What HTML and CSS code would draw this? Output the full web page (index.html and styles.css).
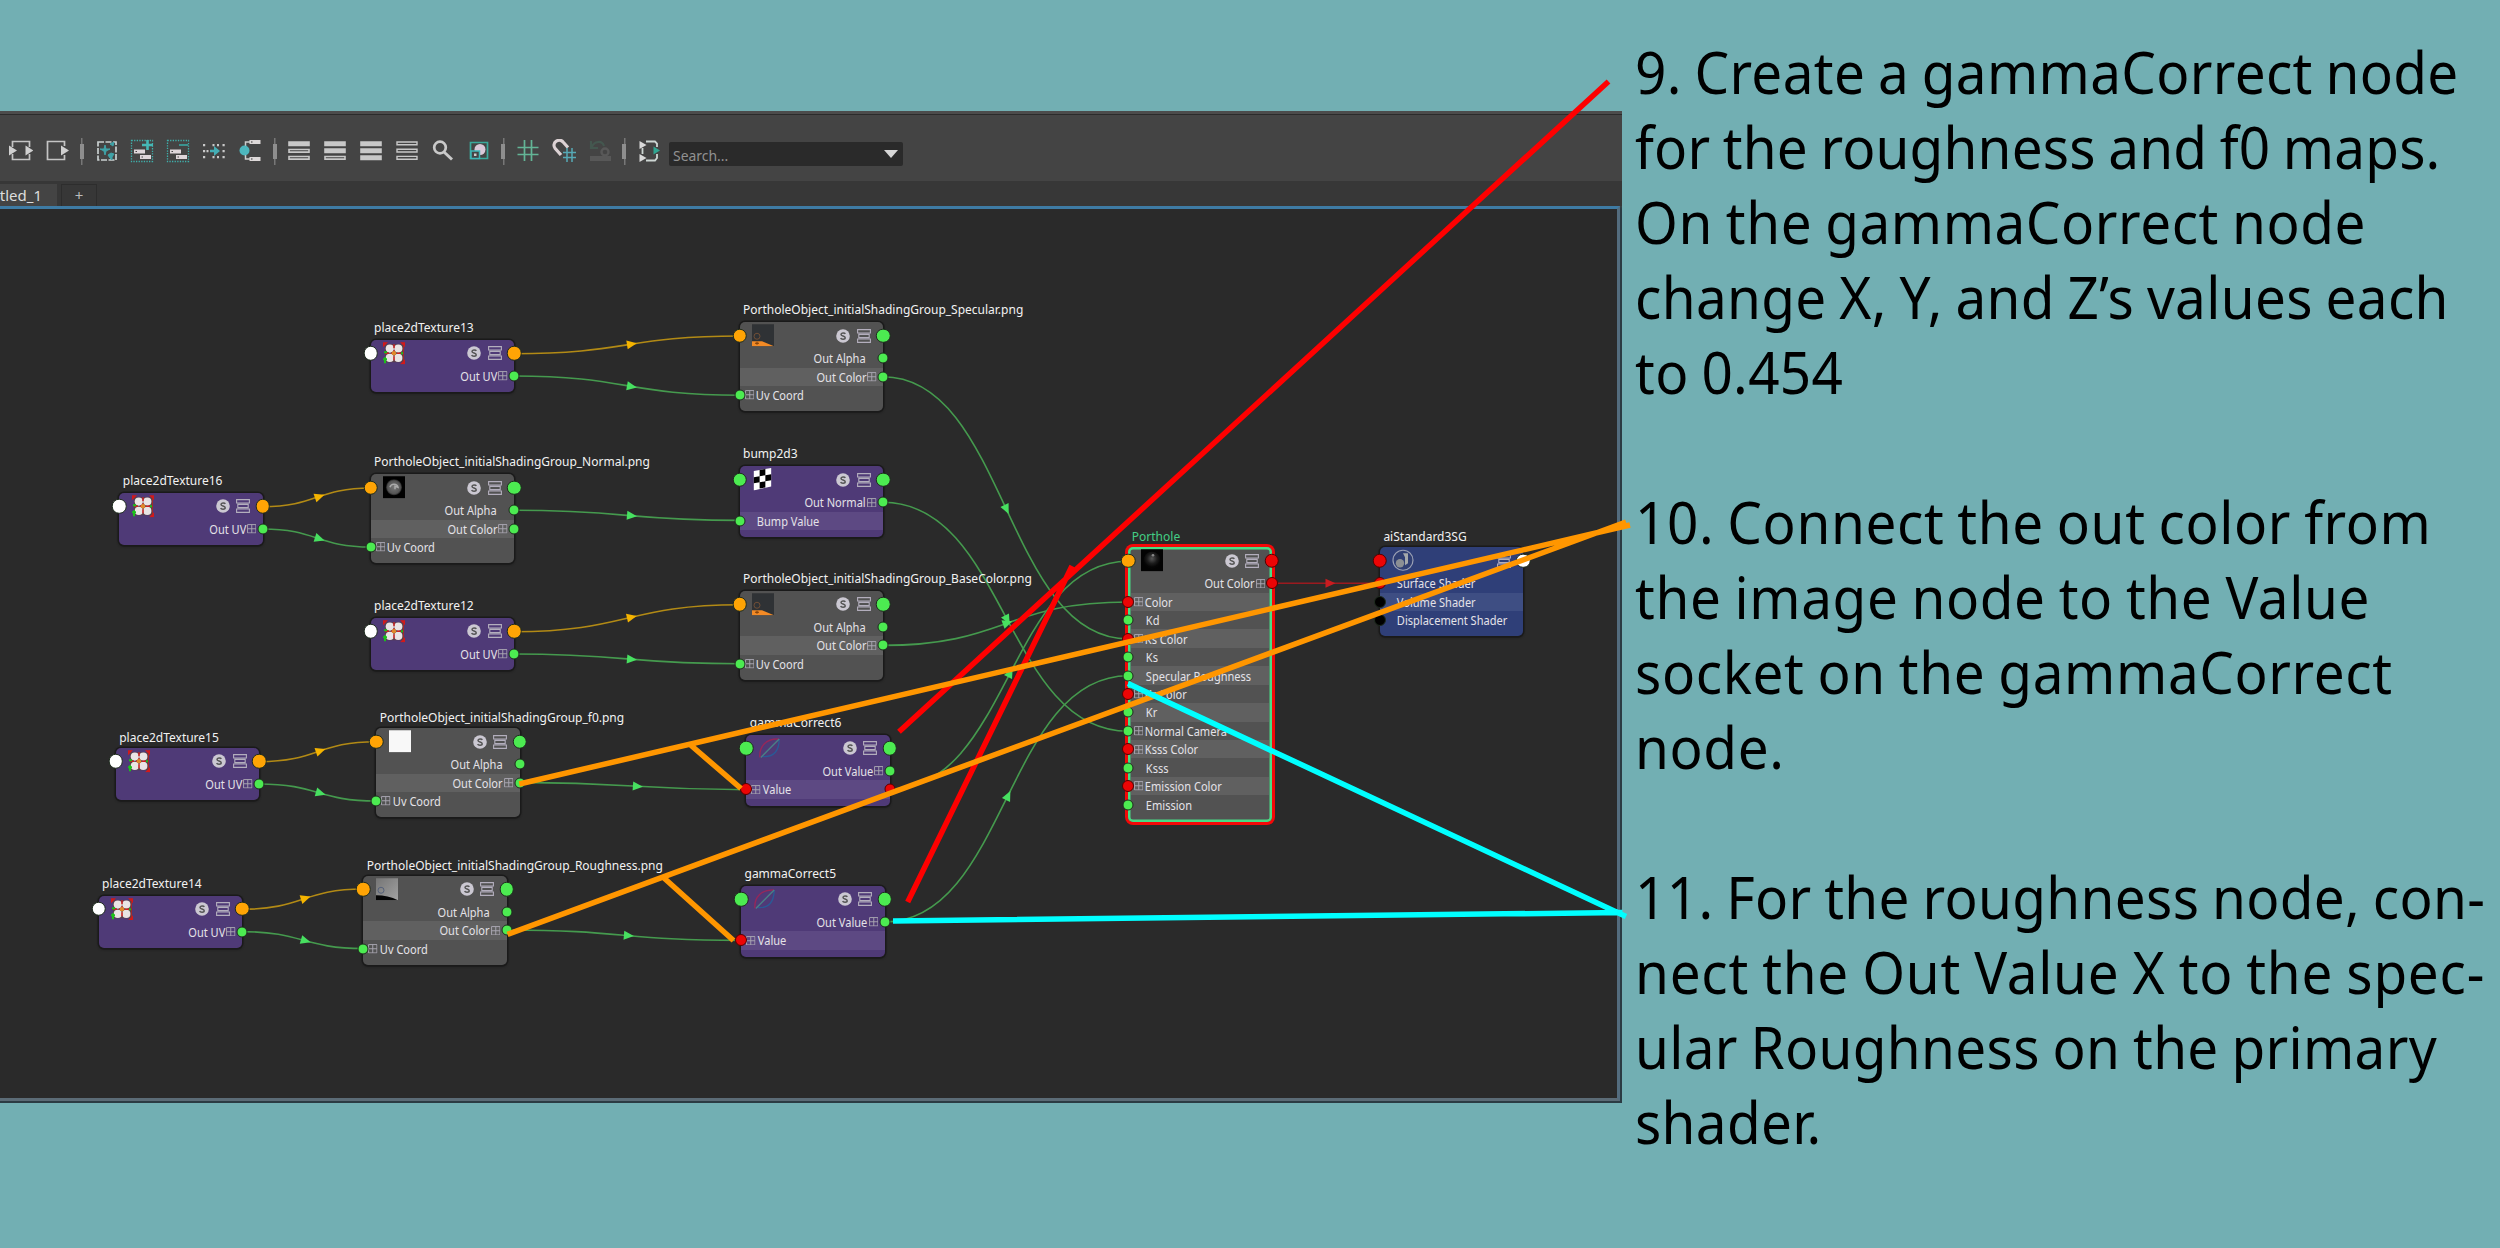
FILE: index.html
```html
<!DOCTYPE html>
<html lang="en">
<head>
<meta charset="utf-8">
<title>Shader graph walkthrough</title>
<link rel="stylesheet" href="styles.css">
</head>
<body>
<svg class="defs" aria-hidden="true">
  <defs>
    <radialGradient id="orb" cx=".5" cy=".4" r=".5"><stop offset="0" stop-color="#555"/><stop offset=".6" stop-color="#1b1b1b"/><stop offset="1" stop-color="#050505"/></radialGradient>
    <radialGradient id="disc"><stop offset="0" stop-color="#777"/><stop offset=".8" stop-color="#555"/><stop offset="1" stop-color="#222"/></radialGradient>
    <linearGradient id="fog" x1="0" y1="0" x2="1" y2="1"><stop offset="0" stop-color="#757575"/><stop offset="1" stop-color="#a2a2a2"/></linearGradient>
  </defs>
  <symbol id="arrow" viewBox="0 0 10 10" overflow="visible"><path d="M0-4.5 10 0 0 4.5Z"/></symbol>
  <symbol id="solo" viewBox="0 0 14 14"><circle cx="7" cy="7" r="6.8" fill="#cbc8d2"/><path d="M9.300 4.900C8.700 3.500 5 3.400 5 5.500 5 7.400 9.200 6.600 9.200 8.700 9.200 10.700 5.200 10.600 4.700 9" fill="none" stroke="#555" stroke-width="1.500"/></symbol>
  <symbol id="bars" viewBox="0 0 14 14"><g fill="none" stroke="#b3aebd" stroke-width="1.100"><path d="M.6.6h12.800v3.400H.6zM.6 10h12.800v3.400H.6zM1.800 5.400h10.400v3.200H1.800z"/></g></symbol>
  <symbol id="plus" viewBox="0 0 10 10"><path d="M.6.6h8.800v8.800H.6zM5 .6v8.800M.6 5h8.800" fill="none" stroke="#aaa6b2" stroke-width="1"/></symbol>
  <symbol id="t-uv" viewBox="0 0 22 22"><path d="M2 2h18v18H2z" fill="#5a3f4a"/><g fill="#e9e4e4"><circle cx="6.800" cy="6.300" r="4.100"/><circle cx="15.300" cy="6.300" r="4.100"/><circle cx="6.800" cy="15.700" r="4.100"/><circle cx="15.300" cy="15.700" r="4.100"/></g><path d="M0 0h5L0 5zM22 0h-5l5 5zM22 22h-5l5-5z" fill="#d11a1a"/><path d="M11 2v18M2 11h18" stroke="#c22" stroke-width="1.500" stroke-dasharray="4 2"/><path d="M0 17h4M2 15v6M1 10h3M18 11h3" stroke="#1bc01b" stroke-width="2"/><circle cx="11" cy="11" r="2.200" fill="#e0892a"/><path d="M20.500 3v16" stroke="#a12a2a"/></symbol>
  <symbol id="t-normal" viewBox="0 0 22 22"><path d="M0 0h22v22H0z"/><circle cx="11" cy="11" r="8" fill="url(#disc)"/><path d="M7 11c1-4 7-4 8 0l-3-1v3" fill="none" stroke="#aaa" stroke-width="1.500"/></symbol>
  <symbol id="t-color" viewBox="0 0 22 22"><path d="M0 0h22v22H0z" fill="#2f3235"/><circle cx="5" cy="12" r="3" fill="none" stroke="#704e35"/><path d="M0 17l10 0 12 5H0z" fill="#f38a25"/><path d="M3 19h4M5 17.500v3" stroke="#7a3c08"/></symbol>
  <symbol id="t-white" viewBox="0 0 22 22"><path d="M0 0h22v22H0z" fill="#f8f8f8"/></symbol>
  <symbol id="t-rough" viewBox="0 0 22 22"><path d="M0 0h22v22H0z" fill="url(#fog)"/><path d="M0 17q12 0 22 5H0z" fill="#050505"/><circle cx="5" cy="12" r="3" fill="none" stroke="#55617a"/></symbol>
  <symbol id="t-check" viewBox="0 0 20 22"><path d="M1 3 18 0v18L1 22z" fill="#fff"/><path d="M6.700 2 12.300 1v6L6.700 8zM1 9l5.700-1v6L1 15zM12.300 7 18 6v6l-5.700 1zM6.700 14l5.600-1v6l-5.600 1z"/></symbol>
  <symbol id="t-gamma" viewBox="0 0 24 24"><g fill="none" stroke-width="1.500"><path d="M1 22C0 10 8 1 22 2" stroke="#96275a"/><path d="M22 2C22 14 17 22 4 21" stroke="#2a5a96"/><path d="M2 22 22 2" stroke="#4a7f86"/></g></symbol>
  <symbol id="t-orb" viewBox="0 0 22 22"><path d="M0 0h22v22H0z" fill="#030303"/><circle cx="11" cy="11" r="8.500" fill="url(#orb)"/><circle cx="12" cy="6" r="1.300" fill="#888"/></symbol>
  <symbol id="t-sg" viewBox="0 0 22 22"><circle cx="11" cy="11" r="10" fill="#303f73" stroke="#9aa0b4" stroke-width="1.200"/><circle cx="8" cy="14" r="4.200" fill="#8b8f94"/><path d="M11 4h5v10l-3 2V8z" fill="#a5a9ab"/></symbol>
</svg>

<main class="page">
  <section class="editor">
    <div class="toolbar">
      <svg class="tool" viewBox="0 0 24 24"><path d="M3.500 8V2.500h17V8M3.500 15v5.500h17V15" fill="none" stroke="#c4c4c4" stroke-width="1.700"/><path d="M0 6.500l8 5-8 5zM16.500 6.500l8 5-8 5z" fill="#d0d0d0"/></svg>
      <svg class="tool" viewBox="0 0 24 24"><path d="M19.500 7V2.500h-17v18h17V16" fill="none" stroke="#c4c4c4" stroke-width="1.700"/><path d="M16 6.500l8 5-8 5z" fill="#d0d0d0"/></svg>
      <span class="sep"></span>
      <svg class="tool" viewBox="0 0 24 24"><path d="M3 3h18v18H3z" fill="none" stroke="#c9d0d0" stroke-width="1.700" stroke-dasharray="6 1.500"/><path d="M5 10h4l1-4 1 4h4l-4 2-1 4-1-4zM13 16l3-2 3 1-2 3v3l-2-2zM15 5l4-2-1 4z" fill="#3fa3a8" stroke="#3fa3a8"/></svg>
      <svg class="tool" viewBox="0 0 24 24"><path d="M1.500 1.500h21v21h-21z" fill="none" stroke="#3fb0ab" stroke-width="1.300" stroke-dasharray="1.300 1.300"/><path d="M12 6h11M17.500 1v10" stroke="#45b8b6" stroke-width="2.600"/><path d="M4 10.500h11v4H4zM10 16h11v4H10z" fill="#ded6da"/><path d="M5.500 12.500h1.500M11.500 18H13" stroke="#444"/></svg>
      <svg class="tool" viewBox="0 0 24 24"><path d="M1.500 1.500h21v21h-21z" fill="none" stroke="#3fb0ab" stroke-width="1.300" stroke-dasharray="1.300 1.300"/><path d="M13 6h9" stroke="#3b938f" stroke-width="2"/><path d="M4 10.500h11v4H4zM10 16h11v4H10z" fill="#ded6da"/><path d="M5.500 12.500h1.500M11.500 18H13" stroke="#444"/></svg>
      <svg class="tool" viewBox="0 0 24 24"><g fill="#c9c9c9"><path d="M1 5h2.200v2.200H1zM1 11h2.200v2.200H1zM1 17h2.200v2.200H1zM4.500 11h2v2.200h-2zM10.500 5h2v2.200h-2zM15 5h2v2.200h-2zM20.500 5h2.200v2.200h-2.200zM20.500 11h2.200v2.200h-2.200zM20.500 17h2.200v2.200h-2.200zM10.500 17h2v2.200h-2zM15 17h2v2.200h-2z"/></g><path d="M8 12h5" stroke="#44aeb5" stroke-width="2.500"/><path d="M12 7l6 5-6 5z" fill="#44aeb5"/></svg>
      <svg class="tool" viewBox="0 0 24 24"><path d="M12 3H7.500v4M7.500 16v4H12" fill="none" stroke="#ccc" stroke-width="1.500"/><circle cx="6.500" cy="11.500" r="5" fill="#4db6bd"/><path d="M11.500 1h11v4h-11zM11.500 18h11v4h-11z" fill="#ddd8d8"/><path d="M13 3h1.500M13 20h1.500" stroke="#333"/></svg>
      <span class="sep"></span>
      <svg class="tool" viewBox="0 0 24 24"><g fill="#c8c8c8" stroke="#c8c8c8" stroke-width="1.600"><path d="M2 3h20v3.500H2z"/><path d="M2 10.500h20v2.600H2zM2 17.500h20v2.600H2z" fill="none"/></g></svg>
      <svg class="tool" viewBox="0 0 24 24"><g fill="#c8c8c8" stroke="#c8c8c8" stroke-width="1.600"><path d="M2 3h20v3.500H2zM2 10h20v3.500H2z"/><path d="M2 17.500h20v2.600H2z" fill="none"/></g></svg>
      <svg class="tool" viewBox="0 0 24 24"><g fill="#c8c8c8" stroke="#c8c8c8" stroke-width="1.600"><path d="M2 3h20v3.500H2zM2 10h20v3.500H2zM2 17h20v3.500H2z"/></g></svg>
      <svg class="tool" viewBox="0 0 24 24"><g fill="none" stroke="#c8c8c8" stroke-width="1.400"><path d="M2 3h20v2.800H2zM2 10.200h20v2.800H2zM2 17.400h20v2.800H2z"/></g></svg>
      <svg class="tool" viewBox="0 0 24 24"><circle cx="9" cy="8.500" r="5.800" fill="none" stroke="#c9c9c9" stroke-width="2.700"/><path d="M13 13l8 7.500" stroke="#c9c9c9" stroke-width="3"/></svg>
      <svg class="tool" viewBox="0 0 24 24"><path d="M3.500 3.500h17v16h-17z" fill="none" stroke="#3aa99b" stroke-width="1.700"/><circle cx="13" cy="10.500" r="5.500" fill="#dac8d8"/><path d="M4 12h8.500v7.500H4z" fill="#444" stroke="#3fb5b5" stroke-width="1.500"/><path d="M7 14.500h2.500V17H7z" fill="#ccc"/></svg>
      <span class="sep"></span>
      <svg class="tool" viewBox="0 0 24 24"><path d="M8.500 1v21M15.500 1v21M1.500 8.500h21M1.500 15.500h21" stroke="#63b596" stroke-width="1.700"/></svg>
      <svg class="tool" viewBox="0 0 24 24"><path d="M9 16 3.200 9.500C-1 4 7-2 11.300 3.200L16 8.500" fill="none" stroke="#dcd2d4" stroke-width="3.200"/><path d="M15 9v14M20 9v14M11 13.500h13M11 18.500h13" stroke="#56a9b5" stroke-width="1.500"/></svg>
      <svg class="tool" viewBox="0 0 24 24"><path d="M3 2v7h7M4 8c2-6 10-7 12-1" fill="none" stroke="#44574f" stroke-width="2.200"/><path d="M2 17h21v5H2z" fill="#585858"/><circle cx="17" cy="13" r="3.500" fill="none" stroke="#585858" stroke-width="2.400"/></svg>
      <span class="sep"></span>
      <svg class="tool" viewBox="0 0 24 24"><path d="M9 2.500h9l2 2V8M20 15v4l-2 2.500H9M5.500 9v6" fill="none" stroke="#cdd6d3" stroke-width="1.800"/><path d="M2.500 2l7 4-7 4zM2.500 15l7 4-7 4z" fill="#d9d9d9"/><path d="M16.500 7.500l6.500 4-6.500 4z" fill="#2fa591"/></svg>
      <div class="search"><span>Search...</span><i class="caret"></i></div>
    </div>

    <div class="tabs"><div class="tab tab-on"><span>untitled_1</span></div><div class="tab tab-add">+</div></div>

    <div class="canvas">
      <svg class="wires" viewBox="0 209 1616 888">
        <g class="w-orange">
          <path d="M514 353.700C627 353.700 627 336 740 336"/><use href="#arrow" transform="translate(627 344.900) rotate(-9)" width="10" height="10"/>
          <path d="M262.700 506.700C316.800 506.700 316.800 488 371 488"/><use href="#arrow" transform="translate(315 497.900) rotate(-19)" width="10" height="10"/>
          <path d="M514 631.700C627 631.700 627 604.700 740 604.700"/><use href="#arrow" transform="translate(627 618.200) rotate(-13)" width="10" height="10"/>
          <path d="M259.300 761.700C317.800 761.700 317.800 741.700 376.300 741.700"/><use href="#arrow" transform="translate(316 752.300) rotate(-19)" width="10" height="10"/>
          <path d="M242.300 909.300C302.800 909.300 302.800 889 363.300 889"/><use href="#arrow" transform="translate(301 899.600) rotate(-18)" width="10" height="10"/>
        </g>
        <g class="w-green">
          <path d="M514 376C627 376 627 395.300 740 395.300"/><use href="#arrow" transform="translate(627 385.700) rotate(10)" width="10" height="10"/>
          <path d="M262.700 529C316.800 529 316.800 547 371 547"/><use href="#arrow" transform="translate(315 537.400) rotate(18)" width="10" height="10"/>
          <path d="M514 510.300C627 510.300 627 520.400 740 520.400"/><use href="#arrow" transform="translate(627 515.300) rotate(5)" width="10" height="10"/>
          <path d="M514 654C627 654 627 663.800 740 663.800"/><use href="#arrow" transform="translate(627 658.900) rotate(5)" width="10" height="10"/>
          <path d="M259.300 784C317.800 784 317.800 801 376.300 801"/><use href="#arrow" transform="translate(316 791.900) rotate(16)" width="10" height="10"/>
          <path d="M242.300 931.600C302.800 931.600 302.800 948.500 363.300 948.500"/><use href="#arrow" transform="translate(301 939.500) rotate(16)" width="10" height="10"/>
          <path d="M519.700 782.400C632.900 782.400 632.900 789.700 746 789.700"/><use href="#arrow" transform="translate(632.900 786) rotate(4)" width="10" height="10"/>
          <path d="M506.700 930C623.900 930 623.900 940.400 741 940.400"/><use href="#arrow" transform="translate(623.900 935.200) rotate(5)" width="10" height="10"/>
          <path d="M883 376.700C1005.700 376.700 1005.700 638.900 1128.300 638.900"/><use href="#arrow" transform="translate(1004.500 505) rotate(65)" width="10" height="10"/>
          <path d="M883 502.300C1005.700 502.300 1005.700 731.200 1128.300 731.200"/><use href="#arrow" transform="translate(1005 615.500) rotate(62)" width="10" height="10"/>
          <path d="M883 645.400C1005.700 645.400 1005.700 602 1128.300 602"/><use href="#arrow" transform="translate(1003 624.600) rotate(-20)" width="10" height="10"/>
          <path d="M890 789C1009 789 1009 561.300 1128.300 561.300"/><use href="#arrow" transform="translate(1008 677) rotate(-62)" width="10" height="10"/>
          <path d="M884.300 922C1006.300 922 1006.300 675.800 1128.300 675.800"/><use href="#arrow" transform="translate(1006 800) rotate(-64)" width="10" height="10"/>
        </g>
        <g class="w-red"><path d="M1272 583.300H1380"/><use href="#arrow" transform="translate(1325.500 583.300)" width="10" height="10"/></g>
      </svg>

      <article class="node purple n-p13"><h3>place2dTexture13</h3><header><b class="port big in white"></b><svg class="thumb"><use href="#t-uv"/></svg><svg class="solo"><use href="#solo"/></svg><svg class="bars"><use href="#bars"/></svg><b class="port big out orange"></b></header>
        <div class="row right"><span>Out UV</span><svg class="plus"><use href="#plus"/></svg><b class="port out green"></b></div></article>

      <article class="node purple n-p16"><h3>place2dTexture16</h3><header><b class="port big in white"></b><svg class="thumb"><use href="#t-uv"/></svg><svg class="solo"><use href="#solo"/></svg><svg class="bars"><use href="#bars"/></svg><b class="port big out orange"></b></header>
        <div class="row right"><span>Out UV</span><svg class="plus"><use href="#plus"/></svg><b class="port out green"></b></div></article>

      <article class="node purple n-p12"><h3>place2dTexture12</h3><header><b class="port big in white"></b><svg class="thumb"><use href="#t-uv"/></svg><svg class="solo"><use href="#solo"/></svg><svg class="bars"><use href="#bars"/></svg><b class="port big out orange"></b></header>
        <div class="row right"><span>Out UV</span><svg class="plus"><use href="#plus"/></svg><b class="port out green"></b></div></article>

      <article class="node purple n-p15"><h3>place2dTexture15</h3><header><b class="port big in white"></b><svg class="thumb"><use href="#t-uv"/></svg><svg class="solo"><use href="#solo"/></svg><svg class="bars"><use href="#bars"/></svg><b class="port big out orange"></b></header>
        <div class="row right"><span>Out UV</span><svg class="plus"><use href="#plus"/></svg><b class="port out green"></b></div></article>

      <article class="node purple n-p14"><h3>place2dTexture14</h3><header><b class="port big in white"></b><svg class="thumb"><use href="#t-uv"/></svg><svg class="solo"><use href="#solo"/></svg><svg class="bars"><use href="#bars"/></svg><b class="port big out orange"></b></header>
        <div class="row right"><span>Out UV</span><svg class="plus"><use href="#plus"/></svg><b class="port out green"></b></div></article>

      <article class="node gray n-spec"><h3>PortholeObject_initialShadingGroup_Specular.png</h3><header><b class="port big in orange"></b><svg class="thumb"><use href="#t-color"/></svg><svg class="solo"><use href="#solo"/></svg><svg class="bars"><use href="#bars"/></svg><b class="port big out green"></b></header>
        <div class="row right"><span>Out Alpha</span><b class="port out green"></b></div>
        <div class="row right lit"><span>Out Color</span><svg class="plus"><use href="#plus"/></svg><b class="port out green"></b></div>
        <div class="row"><b class="port in green"></b><svg class="plus"><use href="#plus"/></svg><span>Uv Coord</span></div></article>

      <article class="node gray n-normal"><h3>PortholeObject_initialShadingGroup_Normal.png</h3><header><b class="port big in orange"></b><svg class="thumb"><use href="#t-normal"/></svg><svg class="solo"><use href="#solo"/></svg><svg class="bars"><use href="#bars"/></svg><b class="port big out green"></b></header>
        <div class="row right"><span>Out Alpha</span><b class="port out green"></b></div>
        <div class="row right lit"><span>Out Color</span><svg class="plus"><use href="#plus"/></svg><b class="port out green"></b></div>
        <div class="row"><b class="port in green"></b><svg class="plus"><use href="#plus"/></svg><span>Uv Coord</span></div></article>

      <article class="node gray n-base"><h3>PortholeObject_initialShadingGroup_BaseColor.png</h3><header><b class="port big in orange"></b><svg class="thumb"><use href="#t-color"/></svg><svg class="solo"><use href="#solo"/></svg><svg class="bars"><use href="#bars"/></svg><b class="port big out green"></b></header>
        <div class="row right"><span>Out Alpha</span><b class="port out green"></b></div>
        <div class="row right lit"><span>Out Color</span><svg class="plus"><use href="#plus"/></svg><b class="port out green"></b></div>
        <div class="row"><b class="port in green"></b><svg class="plus"><use href="#plus"/></svg><span>Uv Coord</span></div></article>

      <article class="node gray n-f0"><h3>PortholeObject_initialShadingGroup_f0.png</h3><header><b class="port big in orange"></b><svg class="thumb"><use href="#t-white"/></svg><svg class="solo"><use href="#solo"/></svg><svg class="bars"><use href="#bars"/></svg><b class="port big out green"></b></header>
        <div class="row right"><span>Out Alpha</span><b class="port out green"></b></div>
        <div class="row right lit"><span>Out Color</span><svg class="plus"><use href="#plus"/></svg><b class="port out green"></b></div>
        <div class="row"><b class="port in green"></b><svg class="plus"><use href="#plus"/></svg><span>Uv Coord</span></div></article>

      <article class="node gray n-rough"><h3>PortholeObject_initialShadingGroup_Roughness.png</h3><header><b class="port big in orange"></b><svg class="thumb"><use href="#t-rough"/></svg><svg class="solo"><use href="#solo"/></svg><svg class="bars"><use href="#bars"/></svg><b class="port big out green"></b></header>
        <div class="row right"><span>Out Alpha</span><b class="port out green"></b></div>
        <div class="row right lit"><span>Out Color</span><svg class="plus"><use href="#plus"/></svg><b class="port out green"></b></div>
        <div class="row"><b class="port in green"></b><svg class="plus"><use href="#plus"/></svg><span>Uv Coord</span></div></article>

      <article class="node purple n-bump"><h3>bump2d3</h3><header><b class="port big in green"></b><svg class="thumb"><use href="#t-check"/></svg><svg class="solo"><use href="#solo"/></svg><svg class="bars"><use href="#bars"/></svg><b class="port big out green"></b></header>
        <div class="row right"><span>Out Normal</span><svg class="plus"><use href="#plus"/></svg><b class="port out green"></b></div>
        <div class="row bare lit"><b class="port in green"></b><span>Bump Value</span></div></article>

      <article class="node purple n-g6"><h3>gammaCorrect6</h3><header><b class="port big in green"></b><svg class="thumb"><use href="#t-gamma"/></svg><svg class="solo"><use href="#solo"/></svg><svg class="bars"><use href="#bars"/></svg><b class="port big out green"></b></header>
        <div class="row right"><span>Out Value</span><svg class="plus"><use href="#plus"/></svg><b class="port out green"></b></div>
        <div class="row lit"><b class="port in mid red"></b><svg class="plus"><use href="#plus"/></svg><span>Value</span><b class="port out red"></b></div></article>

      <article class="node purple n-g5"><h3>gammaCorrect5</h3><header><b class="port big in green"></b><svg class="thumb"><use href="#t-gamma"/></svg><svg class="solo"><use href="#solo"/></svg><svg class="bars"><use href="#bars"/></svg><b class="port big out green"></b></header>
        <div class="row right"><span>Out Value</span><svg class="plus"><use href="#plus"/></svg><b class="port out green"></b></div>
        <div class="row lit"><b class="port in mid red"></b><svg class="plus"><use href="#plus"/></svg><span>Value</span></div></article>

      <article class="node gray selected n-port"><h3>Porthole</h3><header><b class="port big in orange"></b><svg class="thumb"><use href="#t-orb"/></svg><svg class="solo"><use href="#solo"/></svg><svg class="bars"><use href="#bars"/></svg><b class="port big out red"></b></header>
        <div class="row right"><span>Out Color</span><svg class="plus"><use href="#plus"/></svg><b class="port mid out red"></b></div>
        <div class="row lit"><b class="port mid in red"></b><svg class="plus"><use href="#plus"/></svg><span>Color</span></div>
        <div class="row bare"><b class="port in green"></b><span>Kd</span></div>
        <div class="row lit"><b class="port mid in red"></b><svg class="plus"><use href="#plus"/></svg><span>Ks Color</span></div>
        <div class="row bare"><b class="port in green"></b><span>Ks</span></div>
        <div class="row bare lit"><b class="port in green"></b><span>Specular Roughness</span></div>
        <div class="row"><b class="port mid in red"></b><svg class="plus"><use href="#plus"/></svg><span>Kr Color</span></div>
        <div class="row bare lit"><b class="port in green"></b><span>Kr</span></div>
        <div class="row"><b class="port in green"></b><svg class="plus"><use href="#plus"/></svg><span>Normal Camera</span></div>
        <div class="row lit"><b class="port mid in red"></b><svg class="plus"><use href="#plus"/></svg><span>Ksss Color</span></div>
        <div class="row bare"><b class="port in green"></b><span>Ksss</span></div>
        <div class="row lit"><b class="port mid in red"></b><svg class="plus"><use href="#plus"/></svg><span>Emission Color</span></div>
        <div class="row bare"><b class="port in green"></b><span>Emission</span></div></article>

      <article class="node blue n-sg"><h3>aiStandard3SG</h3><header><b class="port big in red"></b><svg class="thumb"><use href="#t-sg"/></svg><svg class="bars"><use href="#bars"/></svg><b class="port big out white"></b></header>
        <div class="row bare"><b class="port mid in red"></b><span>Surface Shader</span></div>
        <div class="row bare lit"><b class="port mid in black"></b><span>Volume Shader</span></div>
        <div class="row bare"><b class="port mid in black"></b><span>Displacement Shader</span></div></article>
    </div>
  </section>

  <section class="notes">
    <p class="step-9"><span>9. Create a gammaCorrect node</span><span>for the roughness and f0 maps.</span><span>On the gammaCorrect node</span><span>change X, Y, and Z’s values each</span><span>to 0.454</span></p>
    <p class="step-10"><span>10. Connect the out color from</span><span>the image node to the Value</span><span>socket on the gammaCorrect</span><span>node.</span></p>
    <p class="step-11"><span>11. For the roughness node, con-</span><span>nect the Out Value X to the spec-</span><span>ular Roughness on the primary</span><span>shader.</span></p>
  </section>

  <svg class="pointers" viewBox="0 0 2500 1248">
    <path class="p-red" d="M899 731.700 1608.500 81.500M907.700 902 1072 566"/>
    <path class="p-orange" d="M519.300 784 1630 525M690 744.500 741 788.500M507.500 934.300 1626 522M664 878 733.500 940.500"/>
    <path class="p-cyan" d="M1128 683.500 1626 916.500M893 921 1622.500 912.500"/>
  </svg>
</main>
</body>
</html>
```
FILE: styles.css
```css
* { box-sizing: border-box; }

body {
  margin: 0;
  background: #72afb3;
  font-family: "Noto Sans", "Open Sans", sans-serif;
}

.defs { position: absolute; width: 0; height: 0; }

.page {
  position: relative;
  display: flex;
  align-items: flex-start;
  width: 2500px;
  height: 1248px;
  overflow: hidden;
}

/* Editor window */
.editor {
  display: flex;
  flex-direction: column;
  width: 1622px;
  height: 992px;
  margin-top: 111px;
  background: linear-gradient(#444 0 90px, #2b3b43 95px);
  border-top: 3px solid #4c4c4c;
  flex: none;
}

.toolbar {
  display: flex;
  align-items: center;
  height: 67px;
  padding: 6px 0 0 3.500px;
  border-top: 1px solid #2b2b2b;
}
.tool { width: 24px; height: 24px; margin: 0 5.94px; flex: none; }
.sep {
  width: 13.400px;
  height: 27px;
  flex: none;
  background:
    linear-gradient(#8e8e8e, #8e8e8e) center / 4px 15px no-repeat,
    linear-gradient(#777, #777) center / 1.500px 27px no-repeat;
}
.search {
  display: flex;
  align-items: center;
  justify-content: space-between;
  width: 234px;
  height: 24px;
  margin: 5px 0 0 2px;
  padding: 0 5px 0 4px;
  background: #2a2a2a;
  border-radius: 2px;
  color: #919191;
  font-size: 14.500px;
}
.search span { transform: scaleX(.96); transform-origin: left; padding-top: 2px; }
.caret { border: 7px solid transparent; border-top: 8px solid #d6d6d6; border-bottom: 0; }

.tabs {
  display: flex;
  align-items: flex-end;
  gap: 4px;
  height: 25px;
  background: #373737;
  flex: none;
}
.tab { height: 22px; line-height: 23px; color: #ddd; font-size: 15px; }
.tab-on {
  display: flex;
  justify-content: flex-end;
  width: 57px;
  padding-right: 15px;
  background: #444;
  overflow: hidden;
}
.tab-add {
  width: 36px;
  text-align: center;
  color: #bbb;
  line-height: 20px;
  border: 1px solid #2d2d2d;
  border-bottom: 0;
}

.canvas {
  position: relative;
  flex: 1;
  margin-right: 2px;
  margin-bottom: 2px;
  background: #2a2a2a;
  border-top: 3px solid #3e7ba4;
  border-right: 3px solid #536c7e;
  border-bottom: 3px solid #5b6b76;
}
.wires { position: absolute; left: 0; top: 0; width: 1616px; height: 888px; }
.wires path { stroke-width: 1.600; }
.wires > g > path { fill: none; }
.w-orange { stroke: #b28a15; fill: #f5b400; }
.w-green { stroke: #459a4e; fill: #47e060; }
.w-red { stroke: #9b1a1f; fill: #c91c20; }
.wires use { stroke: none; }

/* Graph nodes */
.node {
  position: absolute;
  width: 143.500px;
  padding-bottom: 7px;
  border-radius: 5px;
  box-shadow: 0 0 0 1.500px #1a1a1a, 0 1px 2px 1px #1c1c1c;
  color: #e4e2e8;
}
.node h3 {
  position: absolute;
  left: 3.500px;
  top: -22px;
  margin: 0;
  font-size: 12px;
  line-height: 20px;
  font-weight: 400;
  white-space: nowrap;
  color: #f2f2f2;
}
.gray { background: #525252; }
.purple { background: #4f3a77; }
.blue { background: #2f3f78; }
.gray .lit { background: #606060; }
.purple .lit { background: #5d4983; }
.blue .lit { background: #3e4e83; }

.node header {
  position: relative;
  display: flex;
  align-items: center;
  height: 26.800px;
  padding: 0 12.500px 0 12.500px;
}
.thumb { width: 22px; height: 22.500px; margin-right: auto; }
.solo { width: 14px; height: 14px; margin-right: 6.500px; }
.bars { width: 14px; height: 14px; }
.row {
  position: relative;
  display: flex;
  align-items: center;
  height: 18.440px;
  padding: 0 6.500px 0 5px;
  font-size: 12px;
  line-height: 18px;
}
.row span {
  position: relative;
  top: 1px;
  padding-left: 2px;
  white-space: nowrap;
  transform: scaleX(.92);
  transform-origin: left;
}
.right { justify-content: flex-end; }
.right span { transform-origin: right; padding: 0 1px 0 0; }
.right span:nth-last-child(2) { margin-right: 9.500px; }
.bare { padding-left: 15.500px; }
.plus { width: 9.500px; height: 9.500px; flex: none; }

.port {
  position: absolute;
  top: 50%;
  width: 11px;
  height: 11px;
  border-radius: 50%;
  border: 1px solid #1e2b1e;
  transform: translate(-50%, -50%);
}
.mid { width: 12px; height: 12px; }
.big { width: 14.500px; height: 14.500px; }
.in { left: 0; }
.out { left: 100%; }
.white { background: #fff; }
.orange { background: #ffa405; }
.green { background: #4ceb51; }
.red { background: #ec0505; border-color: #500; }
.black { background: #000; }

.selected { padding-bottom: 8.500px; box-shadow: inset 0 0 0 2.500px #49db85, 0 0 0 3px #f40808; }
.selected h3 { color: #43cf85; }
.selected header { padding-left: 13px; }
.selected .row { margin: 0 2.500px; padding: 0 4px 0 3px; }
.selected .bare { padding-left: 13px; }
.selected .in { left: -2.500px; }
.selected .out { left: calc(100% + 2.500px); }
.selected header .in { left: 0; }
.selected header .out { left: 100%; }

.n-p13 { left: 370.500px; top: 131px; }
.n-p16 { left: 119.300px; top: 284px; }
.n-p12 { left: 370.500px; top: 409px; }
.n-p15 { left: 115.700px; top: 539px; }
.n-p14 { left: 98.500px; top: 686.500px; }
.n-spec { left: 739.500px; top: 113.300px; }
.n-normal { left: 370.500px; top: 265.300px; }
.n-base { left: 739.500px; top: 382px; }
.n-f0 { left: 376.200px; top: 519.300px; }
.n-rough { left: 363.300px; top: 667px; }
.n-bump { left: 739.500px; top: 257.300px; }
.n-g6 { left: 746.300px; top: 526px; }
.n-g5 { left: 741px; top: 677px; }
.n-port { left: 1128.300px; top: 338.300px; }
.n-sg { left: 1379.900px; top: 338.300px; }
.n-p15 h3, .n-f0 h3, .n-rough h3 { top: -20.500px; }
.n-port h3, .n-sg h3 { top: -20px; }

/* Instruction text */
.notes { padding: 34px 0 0 13px; color: #000; }
.notes p { margin: 0 0 75px; }
.notes span {
  display: block;
  width: max-content;
  font-size: 59px;
  line-height: 75px;
  white-space: nowrap;
  word-spacing: -2px;
  letter-spacing: .35px;
  transform: scaleX(.93);
  transform-origin: left;
}
.step-9 span:nth-child(2) { letter-spacing: .17px; }
.step-9 span:nth-child(3) { letter-spacing: .6px; }
.step-10 span { letter-spacing: .65px; }
.step-11 span:nth-child(2) { letter-spacing: .8px; }

/* Callout strokes drawn over the window and the notes */
.pointers { position: absolute; left: 0; top: 0; width: 2500px; height: 1248px; pointer-events: none; }
.pointers path { fill: none; stroke-width: 5.500; }
.p-red { stroke: #fe0000; }
.p-orange { stroke: #ff9600; }
.p-cyan { stroke: #00ffff; }
```
